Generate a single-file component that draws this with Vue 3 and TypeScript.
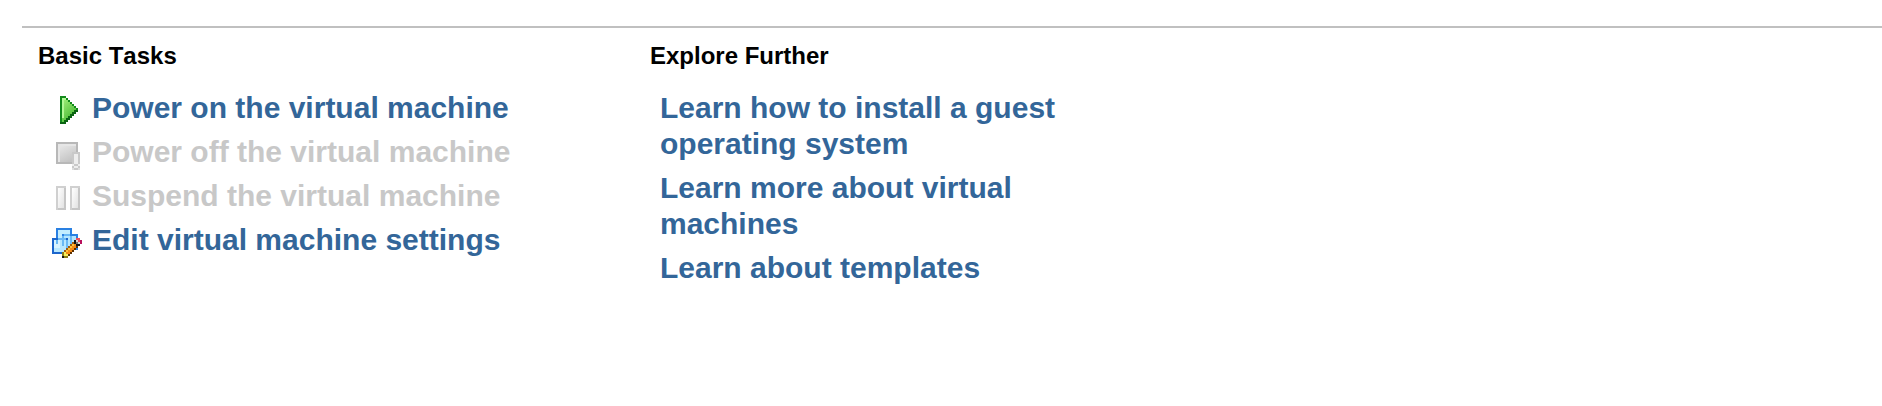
<script setup lang="ts">
interface Task { label: string; icon: string; disabled?: boolean }

const tasks: Task[] = [
  { label: 'Power on the virtual machine', icon: 'play' },
  { label: 'Power off the virtual machine', icon: 'stop', disabled: true },
  { label: 'Suspend the virtual machine', icon: 'pause', disabled: true },
  { label: 'Edit virtual machine settings', icon: 'edit' },
]
const topics: string[] = [
  'Learn how to install a guest operating system',
  'Learn more about virtual machines',
  'Learn about templates',
]
</script>

<template>
  <main class="panel">
    <section class="basic">
      <h2>Basic Tasks</h2>
      <ul>
        <li v-for="t in tasks" :key="t.icon" :class="{ disabled: t.disabled }">
          <svg class="icon" viewBox="0 0 16 16" shape-rendering="crispEdges" aria-hidden="true">
            <g v-if="t.icon === 'play'">
              <defs>
                <linearGradient id="green" x1="0" y1="0" x2="0.6" y2="1">
                  <stop offset="0" stop-color="#a4f07c" /><stop offset="1" stop-color="#48b932" />
                </linearGradient>
              </defs>
              <path fill="#138a1c" d="M5 1h3v1h1v1h1v1h1v1h1v1h1v1h1v2h-1v1h-1v1h-1v1h-1v1h-1v1h-1v1h-3z" />
              <path fill="#0a6412" d="M13 8h1v1h-1v1h-1v1h-1v1h-1v1h-1v1h-1v1h-3v-1h2v-1h1v-1h1v-1h1v-1h1v-1h1v-1h1z" />
              <path fill="url(#green)" d="M6 2h2v1h1v1h1v1h1v1h1v1h1v1h-1v1h-1v1h-1v1h-1v1h-1v1h-1v1h-1z" />
              <path fill="#b4f896" d="M6 2h2v1h-1v9h-1z" />
            </g>
            <g v-else-if="t.icon === 'stop'">
              <defs>
                <linearGradient id="gray" x1="0" y1="0" x2="0.5" y2="1">
                  <stop offset="0" stop-color="#e6e6e6" /><stop offset="1" stop-color="#c4c4c4" />
                </linearGradient>
              </defs>
              <path fill="#b8b8b8" d="M3 2h11v11h-11z" />
              <path fill="#e6e6e6" d="M4 3h9v9h-9z" />
              <path fill="url(#gray)" d="M5 4h8v8h-8z" />
              <path fill="#c9c9c9" d="M11 7h4v9h-4z" />
              <path fill="#eeeeee" d="M12 8h2v5h-2zM12 14h2v1h-2zM11 13h1v1h-1zM14 13h1v1h-1z" />
              <path fill="#dedede" d="M11 15h1v1h-1zM14 15h1v1h-1z" />
            </g>
            <g v-else-if="t.icon === 'pause'">
              <defs>
                <linearGradient id="bar" x1="0" y1="0" x2="1" y2="1">
                  <stop offset="0" stop-color="#ffffff" /><stop offset="1" stop-color="#e2e2e2" />
                </linearGradient>
              </defs>
              <path fill="#d0d0d0" d="M3 2h5v12h-5zM10 2h5v12h-5z" />
              <path fill="#c6c6c6" d="M7 3h1v11h-4v-1h3zM14 3h1v11h-4v-1h3z" />
              <path fill="url(#bar)" d="M4 3h3v10h-3z" />
              <path fill="url(#bar)" d="M11 3h3v10h-3z" />
            </g>
            <g v-else>
              <path fill="#2a80e2" d="M3 1h8v9h-8z" />
              <path fill="#c2edff" d="M4 2h6v7h-6z" />
              <path fill="#2a80e2" d="M6 4h8v8h-8z" />
              <path fill="#b4e6ff" d="M7 5h6v6h-6z" />
              <path fill="#69b9f5" d="M10 5h1v4h-1zM7 4h3v1h-3z" />
              <path fill="#1c66cc" d="M1 6h8v8h-8z" />
              <path fill="#b8e8ff" d="M2 7h6v6h-6z" />
              <path fill="#d8f4ff" d="M2 7h3v4h-3z" />
              <path fill="#69b9f5" d="M3 7h1v2h-1zM6 7h1v3h-1zM6 5h1v1h-1zM4 6h4v1h-4zM8 7h1v5h-1z" />
              <path fill="#a05c10" d="M11 8h1v1h-1zM10 9h1v1h-1zM9 10h1v1h-1zM8 11h1v1h-1zM7 12h1v1h-1z" />
              <path fill="#f58a16" d="M12 8h1v1h1v1h-1v1h-1v1h-1v1h-1v1h-1v1h-1v-3h1v-1h1v-1h1v-1h1z" />
              <path fill="#ffc436" d="M11 9h1v1h-1zM10 10h1v1h-1zM9 11h1v1h-1zM8 12h1v1h-1z" />
              <path fill="#5c3000" d="M13 10h1v1h-1zM12 11h1v1h-1zM11 12h1v1h-1zM10 13h1v1h-1zM9 14h1v1h-1z" />
              <path fill="#f7ef5a" d="M7 13h1v1h1v1h-2z" />
              <path fill="#8b7c16" d="M6 13h1v2h-1zM7 15h2v1h-2z" />
              <path fill="#151515" d="M6 15h1v1h-1zM12 7h1v1h-1zM12 8h1v1h-1zM13 9h2v1h-2z" />
              <path fill="#d8d8d8" d="M13 7h1v1h1v1h-1v-1h-1z" />
              <path fill="#777777" d="M13 8h1v1h-1z" />
              <path fill="#f0525c" d="M13 6h2v2h-1v-1h-1z" />
              <path fill="#b8105c" d="M15 7h1v2h-1z" />
            </g>
          </svg>
          <a>{{ t.label }}</a>
        </li>
      </ul>
    </section>
    <section class="explore">
      <h2>Explore Further</h2>
      <ul>
        <li v-for="topic in topics" :key="topic"><a>{{ topic }}</a></li>
      </ul>
    </section>
  </main>
</template>

<style scoped>
.panel {
  display: flex;
  height: 378px;
  margin-left: 22px;
  border-top: 2px solid #c0c0c0;
  font-family: "Liberation Sans", Arial, sans-serif;
  font-weight: bold;
}
.basic { box-sizing: border-box; width: 628px; padding-left: 16px; }
.explore { width: 430px; }
h2 {
  margin: 14px 0 0;
  font-size: 24px;
  line-height: 28px;
  font-kerning: none;
  color: #000;
}
ul { list-style: none; margin: 20px 0 0; padding: 0; }
li {
  display: flex;
  margin-bottom: 8px;
  font-size: 30px;
  line-height: 36px;
  color: #336699;
}
.basic ul { padding-left: 12px; }
.explore ul { padding-left: 10px; }
.disabled { color: #c8c8c8; }
.icon { width: 32px; height: 32px; margin: 4px 10px 0 0; flex: none; }
</style>

<style>
html, body { background: #fff; }
#app { display: flow-root; padding-top: 26px; }
</style>
